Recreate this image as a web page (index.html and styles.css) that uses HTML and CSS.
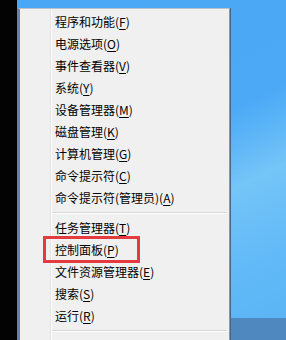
FILE: index.html
```html
<!DOCTYPE html>
<html lang="zh-CN">
  <head>
    <meta charset="utf-8">
    <title>Win+X 菜单</title>
    <link rel="stylesheet" href="styles.css">
  </head>
  <body>
    <div class="screen">
      <div class="edge"></div>
      <div class="desktop">
        <ul class="menu">
          <li>程序和功能(<u>F</u>)</li>
          <li>电源选项(<u>O</u>)</li>
          <li>事件查看器(<u>V</u>)</li>
          <li>系统(<u>Y</u>)</li>
          <li>设备管理器(<u>M</u>)</li>
          <li>磁盘管理(<u>K</u>)</li>
          <li>计算机管理(<u>G</u>)</li>
          <li>命令提示符(<u>C</u>)</li>
          <li>命令提示符(管理员)(<u>A</u>)</li>
          <li class="sep"></li>
          <li>任务管理器(<u>T</u>)</li>
          <li><span class="mark">控制面板(<u>P</u>)</span></li>
          <li>文件资源管理器(<u>E</u>)</li>
          <li>搜索(<u>S</u>)</li>
          <li>运行(<u>R</u>)</li>
          <li class="sep"></li>
          <li>桌面(<u>D</u>)</li>
        </ul>
      </div>
    </div>
  </body>
</html>
```

FILE: styles.css
```css
html, body {
  margin: 0;
  padding: 0;
}
body {
  width: 286px;
  height: 340px;
  overflow: hidden;
  font: 12px "Noto Sans CJK SC", "Noto Sans", sans-serif;
  color: #000;
}
.screen {
  display: flex;
  height: 340px;
}
.edge {
  width: 17px;
  background: #030303;
}
.desktop {
  flex: 1;
  padding-top: 8px;
  background:
    linear-gradient(to bottom, transparent 318px, #4f87bf 318px),
    linear-gradient(155deg, #4aa7f5 0%, #4ba9f6 45%, #74c5f8 62%, #62baf7 80%, #58b3f5 100%);
}
.menu {
  list-style: none;
  margin: 0;
  padding: 2px 0 0;
  width: 209px;
  height: 340px;
  border-left: 3px solid #6284aa;
  border-top: 1px solid #b9c4cf;
  border-right: 1px solid #8f99a3;
  box-shadow: 1px 0 0 #4a6582;
  background: linear-gradient(to right, #f0f0f0 30px, #e2e3e3 30px, #e2e3e3 31px, #fff 31px, #fff 32px, #f0f0f0 32px);
}
.menu li {
  height: 22px;
  line-height: 22px;
  padding-left: 35px;
  white-space: nowrap;
}
.menu li.sep {
  height: 0;
  margin: 3px 2px 3px 32px;
  padding: 0;
  border-top: 1px solid #d7d7d7;
  border-bottom: 1px solid #fff;
}
.menu u {
  text-decoration: underline;
  text-underline-offset: 2px;
}
.mark {
  position: relative;
  display: inline-block;
  height: 22px;
}
.mark::after {
  content: "";
  position: absolute;
  left: -12px;
  right: -21px;
  top: -3px;
  bottom: -2px;
  border: 3px solid #e33b40;
}
```
